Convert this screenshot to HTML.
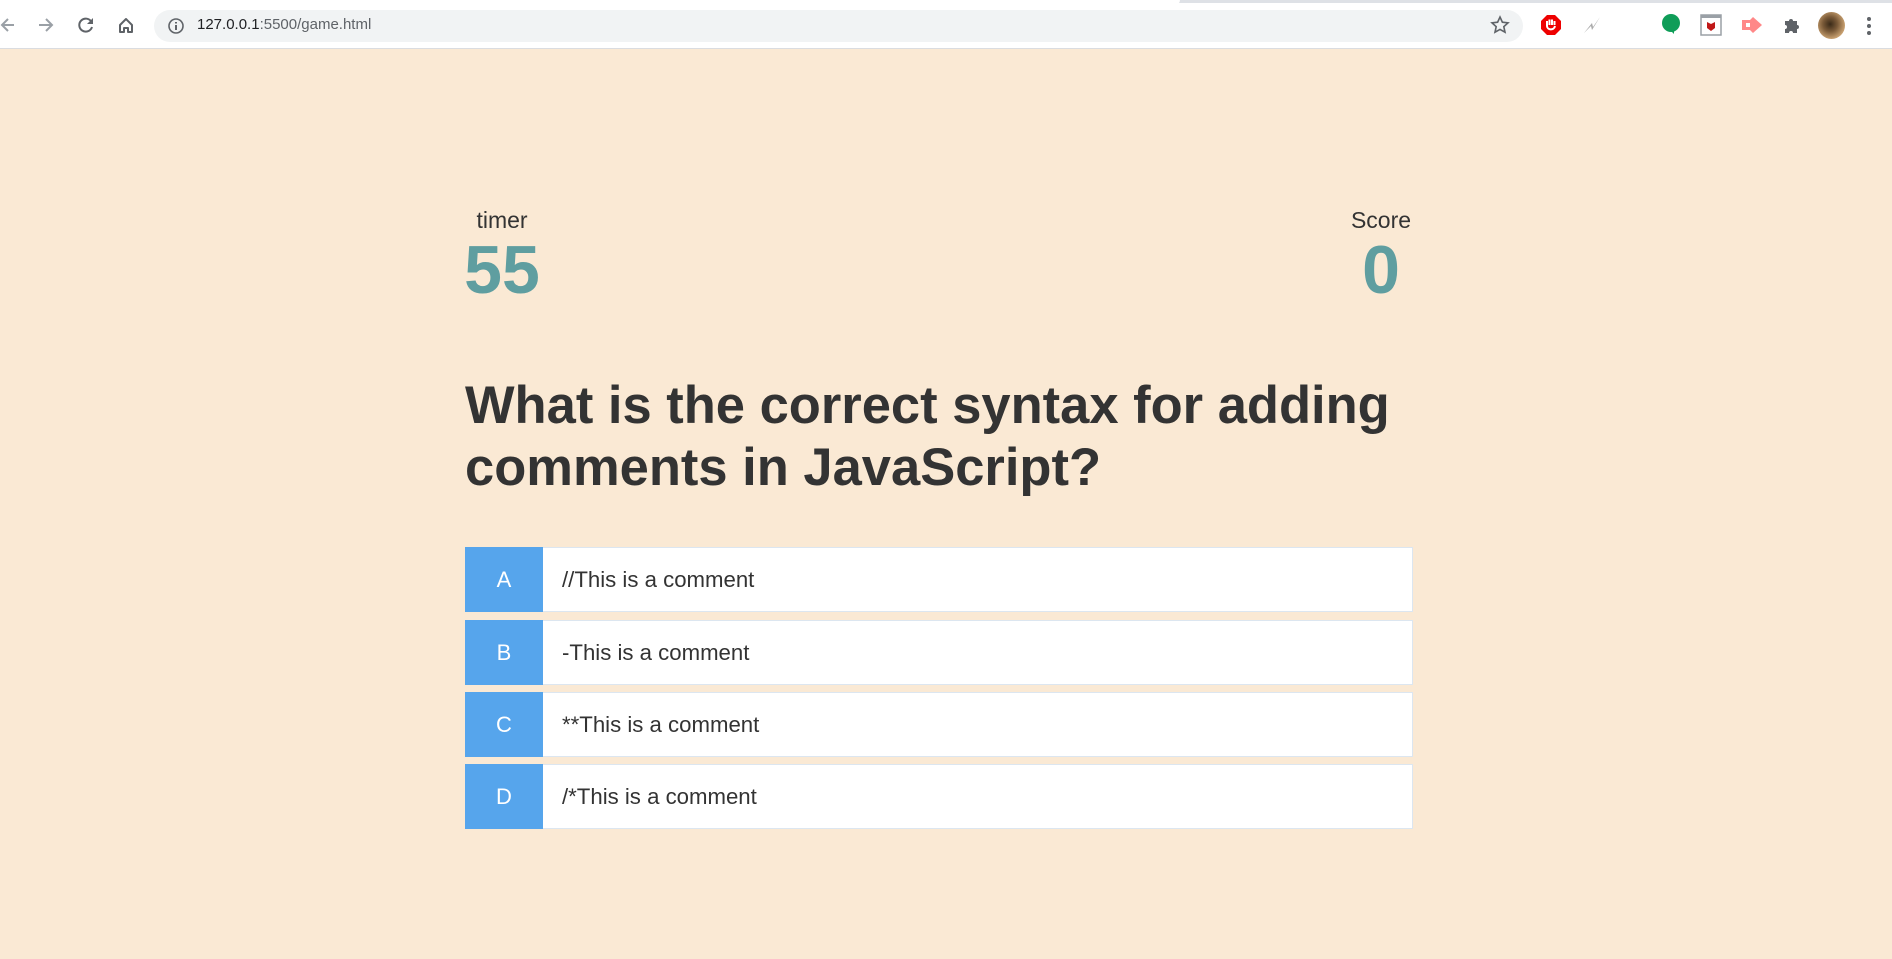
<!DOCTYPE html>
<html><head><meta charset="utf-8"><style>
*{margin:0;padding:0;box-sizing:border-box}
html,body{width:1892px;height:959px;overflow:hidden;background:#fae9d4;font-family:"Liberation Sans",Arial,sans-serif}
.chrome{position:absolute;left:0;top:0;width:1892px;height:49px;background:#fff;border-bottom:1px solid #dadce0}
.chrome .strip{position:absolute;left:0;top:0;width:1892px;height:3px;background:#dee1e6}
.chrome .tabw{position:absolute;left:0;top:0;width:1180px;height:5px;background:#fff;border-radius:0 0 6px 0}
.addr{position:absolute;left:154px;top:10px;width:1369px;height:32px;border-radius:16px;background:#f1f3f4}
.url{position:absolute;left:197px;top:16px;font-size:15px;color:#202124}
.url span{color:#5f6368}
.ic{position:absolute}
.col{position:absolute;text-align:center}
.lbl{font-size:23px;color:#333}
.num{font-size:68px;font-weight:bold;color:#5f9ea0;line-height:68px;margin-top:2px}
h1{position:absolute;left:465px;top:375px;width:980px;font-size:52.5px;line-height:62px;color:#333;font-weight:bold}
.opt{position:absolute;left:465px;width:948px;height:65px;background:#fff;border:1px solid #dce6f0;display:flex;align-items:center}
.opt .l{width:78px;height:65px;margin:-1px 0 -1px -1px;background:#56a5ec;color:#fff;font-size:22px;display:flex;align-items:center;justify-content:center}
.opt .t{font-size:22.2px;color:#333;padding-left:19px}
</style></head><body>
<div class="chrome"><div class="strip"></div><div class="tabw"></div>
<svg class="ic" style="left:0;top:16px" width="16" height="18" viewBox="0 0 16 18"><path d="M14 9H2M8 3L2 9l6 6" stroke="#9aa0a6" stroke-width="2" fill="none"/></svg>
<svg class="ic" style="left:37px;top:16px" width="18" height="18" viewBox="0 0 18 18"><path d="M2 9h13M9 3l6 6-6 6" stroke="#9aa0a6" stroke-width="2" fill="none"/></svg>
<svg class="ic" style="left:77px;top:16px" width="18" height="18" viewBox="0 0 18 18"><path d="M14.5 6A6.5 6.5 0 1 0 15 11" stroke="#5f6368" stroke-width="2" fill="none"/><path d="M16 2v6h-6z" fill="#5f6368"/></svg>
<svg class="ic" style="left:117px;top:16px" width="18" height="18" viewBox="0 0 18 18"><path d="M3 9L9 3l6 6v7h-4v-4H7v4H3z" stroke="#5f6368" stroke-width="2" fill="none" stroke-linejoin="round"/></svg>
<div class="addr"></div>
<svg class="ic" style="left:167px;top:17px" width="18" height="18" viewBox="0 0 18 18"><circle cx="9" cy="9" r="7" stroke="#5f6368" stroke-width="1.6" fill="none"/><path d="M9 8v5M9 5v1.5" stroke="#5f6368" stroke-width="2"/></svg>
<div class="url">127.0.0.1<span>:5500/game.html</span></div>
<svg class="ic" style="left:1490px;top:15px" width="20" height="20" viewBox="0 0 20 20"><path d="M10 2l2.4 5.2 5.6.6-4.2 3.8 1.2 5.6L10 14.4 5 17.2l1.2-5.6L2 7.8l5.6-.6z" stroke="#5f6368" stroke-width="1.6" fill="none"/></svg>
<svg class="ic" style="left:1540px;top:14px" width="22" height="22" viewBox="0 0 22 22"><path d="M7 1h8l6 6v8l-6 6H7l-6-6V7z" fill="#e00"/><path d="M7 12V7M9.5 11V5.5M12 11V5.5M14.5 11V7M7 12c0 4 7 5 8 0" stroke="#fff" stroke-width="2" fill="none"/></svg>
<svg class="ic" style="left:1582px;top:15px" width="20" height="20" viewBox="0 0 20 20"><path d="M2 18L10 8l1 4 7-10-8 13-1-4z" fill="#aaa"/></svg>
<svg class="ic" style="left:1661px;top:13px" width="20" height="22" viewBox="0 0 20 22"><circle cx="10" cy="10" r="9" fill="#0f9d58"/><path d="M9 17l4 4v-5z" fill="#0f9d58"/></svg>
<svg class="ic" style="left:1700px;top:14px" width="22" height="22" viewBox="0 0 22 22"><rect x="1" y="1" width="20" height="20" fill="#fff" stroke="#9aa0a6" stroke-width="1.5"/><rect x="1" y="1" width="20" height="3" fill="#9aa0a6"/><path d="M7 8l4 2 4-2v6l-4 3-4-3z" fill="#c01818"/></svg>
<svg class="ic" style="left:1740px;top:15px" width="24" height="20" viewBox="0 0 24 20"><path d="M2 5h8l3-3 9 8-9 8-3-3H2z" fill="#f88"/><path d="M6 8h4v4H6z" fill="#fff"/></svg>
<svg class="ic" style="left:1782px;top:15px" width="20" height="20" viewBox="0 0 20 20"><path d="M3 6h4a2 2 0 1 1 4 0h4v4a2 2 0 1 1 0 4v4H11a2 2 0 1 0-4 0H3v-4a2 2 0 1 0 0-4z" fill="#5f6368"/></svg>
<div class="ic" style="left:1818px;top:12px;width:27px;height:27px;border-radius:50%;background:radial-gradient(circle at 45% 45%,#3a2a18 0,#7a5a38 35%,#c8a070 70%,#b88a58 100%)"></div>
<svg class="ic" style="left:1866px;top:16px" width="6" height="20" viewBox="0 0 6 20"><circle cx="3" cy="3" r="2" fill="#5f6368"/><circle cx="3" cy="10" r="2" fill="#5f6368"/><circle cx="3" cy="17" r="2" fill="#5f6368"/></svg>
</div>

<div class="col" style="left:462px;top:207px;width:80px"><div class="lbl">timer</div><div class="num">55</div></div>
<div class="col" style="left:1341px;top:207px;width:80px"><div class="lbl">Score</div><div class="num">0</div></div>

<h1>What is the correct syntax for adding comments in JavaScript?</h1>

<div class="opt" style="top:547px"><div class="l">A</div><div class="t">//This is a comment</div></div>
<div class="opt" style="top:620px"><div class="l">B</div><div class="t">-This is a comment</div></div>
<div class="opt" style="top:692px"><div class="l">C</div><div class="t">**This is a comment</div></div>
<div class="opt" style="top:764px"><div class="l">D</div><div class="t">/*This is a comment</div></div>
</body></html>
